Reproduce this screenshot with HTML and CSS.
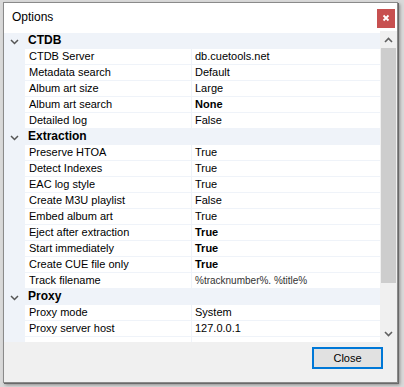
FILE: index.html
```html
<!DOCTYPE html>
<html>
<head>
<meta charset="utf-8">
<link rel="stylesheet" href="styles.css">
</head>
<body>
<div class="window">
  <div class="titlebar">
    <span class="title">Options</span>
    <div class="close-x">
      <svg width="8" height="8" viewBox="0 0 8 8"><path d="M1.5 1.5 L6.5 6.5 M6.5 1.5 L1.5 6.5" stroke="#fff" stroke-width="1.8"/></svg>
    </div>
  </div>
  <div class="grid">
    <div class="list">
      <div class="row cat"><span class="chev"><svg width="9" height="6" viewBox="0 0 9 6"><path d="M1 1 L4.5 4.5 L8 1" fill="none" stroke="#555" stroke-width="1.5"/></svg></span><span class="name">CTDB</span><span class="val"></span></div>
      <div class="row"><span class="strip"></span><span class="name">CTDB Server</span><span class="val">db.cuetools.net</span></div>
      <div class="row"><span class="strip"></span><span class="name">Metadata search</span><span class="val">Default</span></div>
      <div class="row"><span class="strip"></span><span class="name">Album art size</span><span class="val">Large</span></div>
      <div class="row"><span class="strip"></span><span class="name">Album art search</span><span class="val b">None</span></div>
      <div class="row"><span class="strip"></span><span class="name">Detailed log</span><span class="val">False</span></div>
      <div class="row cat"><span class="chev"><svg width="9" height="6" viewBox="0 0 9 6"><path d="M1 1 L4.5 4.5 L8 1" fill="none" stroke="#555" stroke-width="1.5"/></svg></span><span class="name">Extraction</span><span class="val"></span></div>
      <div class="row"><span class="strip"></span><span class="name">Preserve HTOA</span><span class="val">True</span></div>
      <div class="row"><span class="strip"></span><span class="name">Detect Indexes</span><span class="val">True</span></div>
      <div class="row"><span class="strip"></span><span class="name">EAC log style</span><span class="val">True</span></div>
      <div class="row"><span class="strip"></span><span class="name">Create M3U playlist</span><span class="val">False</span></div>
      <div class="row"><span class="strip"></span><span class="name">Embed album art</span><span class="val">True</span></div>
      <div class="row"><span class="strip"></span><span class="name">Eject after extraction</span><span class="val b">True</span></div>
      <div class="row"><span class="strip"></span><span class="name">Start immediately</span><span class="val b">True</span></div>
      <div class="row"><span class="strip"></span><span class="name">Create CUE file only</span><span class="val b">True</span></div>
      <div class="row"><span class="strip"></span><span class="name">Track filename</span><span class="val sm">%tracknumber%. %title%</span></div>
      <div class="row cat"><span class="chev"><svg width="9" height="6" viewBox="0 0 9 6"><path d="M1 1 L4.5 4.5 L8 1" fill="none" stroke="#555" stroke-width="1.5"/></svg></span><span class="name">Proxy</span><span class="val"></span></div>
      <div class="row"><span class="strip"></span><span class="name">Proxy mode</span><span class="val">System</span></div>
      <div class="row"><span class="strip"></span><span class="name">Proxy server host</span><span class="val">127.0.0.1</span></div>
      <div class="row"><span class="strip"></span><span class="name"></span><span class="val"></span></div>
    </div>
    <div class="scrollbar">
      <div class="arrow"><svg width="9" height="6" viewBox="0 0 9 6"><path d="M1 5 L4.5 1.5 L8 5" fill="none" stroke="#606060" stroke-width="1.6"/></svg></div>
      <div class="track"><div class="thumb"></div></div>
      <div class="arrow"><svg width="9" height="6" viewBox="0 0 9 6"><path d="M1 1 L4.5 4.5 L8 1" fill="none" stroke="#606060" stroke-width="1.6"/></svg></div>
    </div>
  </div>
  <div class="footer">
    <button class="btn">Close</button>
  </div>
</div>
</body>
</html>
```

FILE: styles.css
```css
html, body {
  margin: 0;
  padding: 0;
}
body {
  width: 404px;
  height: 387px;
  background: #d9d9d9;
  overflow: hidden;
  font-family: "Liberation Sans", Arial, sans-serif;
}
.window {
  margin: 2px 0 0 3px;
  width: 393px;
  height: 379px;
  border: 1px solid #8a8a8a;
  background: #f0f0f0;
  box-shadow: 1px 1px 0 #6a6a6a, 2px 2px 3px rgba(0,0,0,0.35);
  display: flex;
  flex-direction: column;
  overflow: hidden;
}
.titlebar {
  height: 28px;
  flex: none;
  background: #fff;
  display: flex;
  align-items: center;
  justify-content: space-between;
  padding-left: 8px;
  box-sizing: border-box;
}
.title {
  font-size: 12px;
  color: #000;
}
.close-x {
  width: 18px;
  height: 19px;
  margin-right: 2px;
  margin-top: 2px;
  background: #c75050;
  display: flex;
  align-items: center;
  justify-content: center;
}
.grid {
  height: 311px;
  flex: none;
  display: flex;
  background: #fff;
}
.list {
  flex: 1;
  padding-top: 2px;
  overflow: hidden;
  background: #fff;
}
.row {
  display: flex;
  height: 16px;
  font-size: 11px;
  color: #000;
  line-height: 15px;
}
.strip, .chev {
  width: 21px;
  flex: none;
  background: #eff3f9;
}
.chev {
  display: flex;
  align-items: center;
  justify-content: center;
  padding-top: 1px;
  box-sizing: border-box;
}
.name {
  width: 167px;
  flex: none;
  padding-left: 4px;
  box-sizing: border-box;
  border-bottom: 1px solid #eff3f9;
  border-right: 1px solid #eff3f9;
  white-space: nowrap;
}
.val {
  flex: 1;
  padding-left: 3px;
  border-bottom: 1px solid #eff3f9;
  white-space: nowrap;
}
.val.b {
  font-weight: bold;
}
.val.sm {
  font-size: 10px;
  color: #333;
}
.row.cat {
  background: #eff3f9;
}
.row.cat .name {
  font-weight: bold;
  font-size: 12px;
  border: none;
  padding-left: 3px;
}
.row.cat .val {
  border: none;
}
.scrollbar {
  width: 17px;
  flex: none;
  background: #f0f0f0;
  display: flex;
  flex-direction: column;
}
.arrow {
  height: 17px;
  display: flex;
  align-items: center;
  justify-content: center;
}
.track {
  flex: 1;
  padding: 0 1px;
}
.thumb {
  height: 235px;
  background: #cdcdcd;
}
.footer {
  flex: 1;
  background: #f0f0f0;
  display: flex;
  justify-content: flex-end;
  align-items: flex-start;
  padding: 5px 14px 0 0;
}
.btn {
  width: 71px;
  height: 22px;
  border: 2px solid #0078d7;
  background: #e1e1e1;
  font-family: "Liberation Sans", Arial, sans-serif;
  font-size: 11px;
  color: #000;
  padding: 0;
}
```
